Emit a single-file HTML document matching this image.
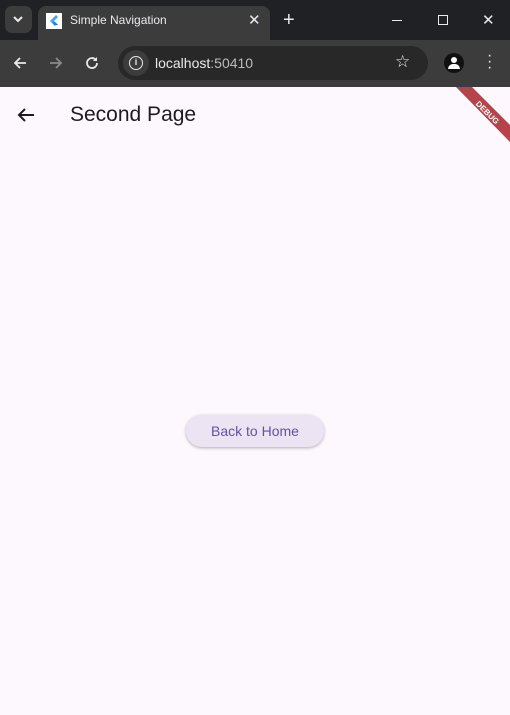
<!DOCTYPE html>
<html><head><style>
*{margin:0;padding:0;box-sizing:border-box}
body{width:510px;height:715px;overflow:hidden;background:#fdf7fe;font-family:"Liberation Sans",sans-serif;position:relative}
.top{position:absolute;left:0;top:0;width:510px;height:40px;background:#202124}
.tab{position:absolute;left:38px;top:6px;width:232px;height:34px;background:#3c3c3c;border-radius:8px 8px 0 0}
.bar{position:absolute;left:0;top:40px;width:510px;height:47px;background:#3c3c3c}
.url{position:absolute;left:118px;top:46px;width:310px;height:34px;background:#282828;border-radius:17px}
.w{color:#e8eaed;position:absolute;font-size:12px}
</style></head><body>
<div class="top"></div>
<div style="position:absolute;left:5px;top:6px;width:27px;height:27px;background:#3c3c3c;border-radius:7px"></div>
<svg style="position:absolute;left:12px;top:14px" width="12" height="10"><path d="M2 3l4 4 4-4" stroke="#e8eaed" stroke-width="2" fill="none"/></svg>
<div class="tab"></div>
<div style="position:absolute;left:46px;top:13px;width:16px;height:16px;background:#fff"></div>
<svg style="position:absolute;left:46px;top:13px" width="16" height="16"><path d="M10 2L4 8l2 2 6-6z" fill="#42a5f5"/><path d="M7 9l3 3h2L9 9z" fill="#0d47a1"/><path d="M6 10l2-2 3 3-2 2z" fill="#1e88e5"/></svg>
<div class="w" style="left:70px;top:13px">Simple Navigation</div>
<div class="w" style="left:248px;top:11px;font-size:15px">✕</div>
<div class="w" style="left:283px;top:9px;font-size:20px">+</div>
<div style="position:absolute;left:392px;top:20px;width:10px;height:1px;background:#e8eaed"></div>
<div style="position:absolute;left:438px;top:15px;width:10px;height:10px;border:1px solid #e8eaed"></div>
<div class="w" style="left:482px;top:11px;font-size:15px">✕</div>
<div class="bar"></div>
<svg style="position:absolute;left:12px;top:55px" width="16" height="16"><path d="M14 8H3M8 3L3 8l5 5" stroke="#e8eaed" stroke-width="1.8" fill="none"/></svg>
<svg style="position:absolute;left:48px;top:55px" width="16" height="16"><path d="M2 8h11M8 3l5 5-5 5" stroke="#8a8a8a" stroke-width="1.8" fill="none"/></svg>
<svg style="position:absolute;left:84px;top:55px" width="16" height="16"><path d="M13 8a5 5 0 1 1-1.5-3.5" stroke="#e8eaed" stroke-width="1.8" fill="none"/><path d="M13 2v4H9z" fill="#e8eaed"/></svg>
<div class="url"></div>
<div style="position:absolute;left:123px;top:50px;width:26px;height:26px;border-radius:13px;background:#3c3c3c"></div>
<div style="position:absolute;left:129px;top:56px;width:14px;height:14px;border:1.5px solid #e8eaed;border-radius:50%;color:#e8eaed;font-size:9px;text-align:center;line-height:11px;font-weight:bold">i</div>
<div class="w" style="left:155px;top:55px;font-size:14px">localhost<span style="color:#bbb">:50410</span></div>
<div class="w" style="left:395px;top:52px;font-size:17px">☆</div>
<div style="position:absolute;left:444px;top:53px;width:20px;height:20px;border-radius:50%;background:#111"></div>
<div style="position:absolute;left:451px;top:57px;width:6px;height:6px;border-radius:50%;background:#fff"></div>
<div style="position:absolute;left:448px;top:64px;width:12px;height:5px;border-radius:5px 5px 0 0;background:#fff"></div>
<div class="w" style="left:487px;top:53px;font-size:16px;line-height:6px">·<br>·<br>·</div>
<svg style="position:absolute;left:16px;top:106px" width="20" height="18"><path d="M18 9H3M9 3L3 9l6 6" stroke="#1d1b20" stroke-width="2" fill="none"/></svg>
<div style="position:absolute;left:70px;top:103px;font-size:21px;color:#1d1b20">Second Page</div>
<svg style="position:absolute;left:440px;top:87px" width="70" height="60">
<polygon points="16,0 32,0 70,38 70,55" fill="#b5434a"/>
<text x="0" y="0" transform="translate(47,26) rotate(45)" text-anchor="middle" dominant-baseline="middle" fill="#fff" font-size="8" font-weight="bold" font-family="Liberation Sans">DEBUG</text>
</svg>
<div style="position:absolute;left:186px;top:415px;width:138px;height:32px;border-radius:16px;background:#ece4f3;box-shadow:0 1px 3px rgba(0,0,0,.3);color:#6750a4;font-size:14px;text-align:center;line-height:32px">Back to Home</div>
</body></html>
